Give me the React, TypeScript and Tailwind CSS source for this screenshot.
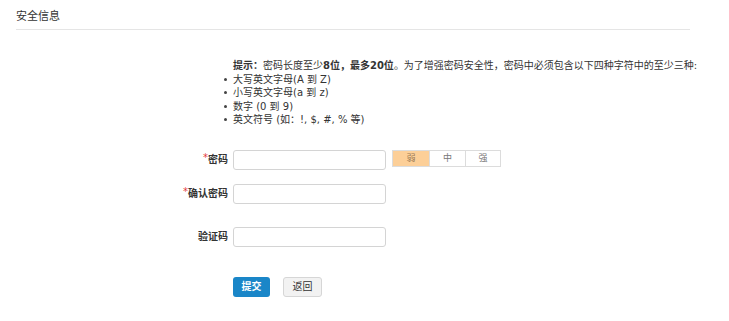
import React from 'react';

const font = { fontFamily: '"DejaVu Sans", "Noto Sans CJK SC", sans-serif' };

const rules = ['大写英文字母(A 到 Z)', '小写英文字母(a 到 z)', '数字 (0 到 9)', '英文符号 (如：!, $, #, % 等)'];

const Field: React.FC<{ label: string; required?: boolean; children?: React.ReactNode; className?: string }> = ({ label, required, children, className }) => (
  <div className={`flex items-start ${className ?? ''}`}>
    <label className="w-[228px] text-right text-[10px] leading-[20px] font-bold text-[#333]">
      {required && <span className="text-[#e4393c] relative top-[-2px] font-normal">*</span>}
      {label}
    </label>
    <input
      type="text"
      className="ml-[5px] w-[153px] h-[20px] border border-[#d4d4d4] rounded-[3px] bg-white outline-none"
    />
    {children}
  </div>
);

export default function App() {
  return (
    <div className="w-[729px] h-[321px] bg-white text-[#333]" style={font}>
      <div className="mx-[16px] pt-[10px] pb-[6px] border-b border-[#e5e5e5] w-[674px]">
        <h2 className="text-[11px] leading-[13px] font-normal">安全信息</h2>
      </div>

      <div className="mt-[29px] text-[10px] leading-[13.5px]">
        <p className="ml-[233px]">
          <b>提示：</b>密码长度至少<b>8位，最多20位</b>。为了增强密码安全性，密码中必须包含以下四种字符中的至少三种:
        </p>
        <ul className="ml-[224px]">
          {rules.map((r) => (
            <li key={r} className="flex items-center">
              <span className="w-[3px] h-[3px] rounded-full bg-[#444] mr-[6px]" />
              {r}
            </li>
          ))}
        </ul>
      </div>

      <Field label="密码" required className="mt-[23px]">
        <div className="ml-[6px] flex h-[17px] border border-[#dcdcdc] text-[9px] leading-[15px]">
          <span className="w-[36px] text-center bg-[#fccf98] text-[#9a7a55]">弱</span>
          <span className="w-[36px] text-center border-l border-[#dcdcdc] text-[#777]">中</span>
          <span className="w-[35px] text-center border-l border-[#dcdcdc] text-[#777]">强</span>
        </div>
      </Field>
      <Field label="确认密码" required className="mt-[14px]" />
      <Field label="验证码" className="mt-[23px]" />

      <div className="mt-[30px] ml-[233px] flex gap-[13px]">
        <button className="w-[37px] h-[20px] rounded-[3px] bg-[#1a86c8] text-white text-[10px] font-bold">提交</button>
        <button className="w-[39px] h-[20px] rounded-[3px] bg-[#f2f2f2] border border-[#d6d6d6] text-[#333] text-[10px]">返回</button>
      </div>
    </div>
  );
}
